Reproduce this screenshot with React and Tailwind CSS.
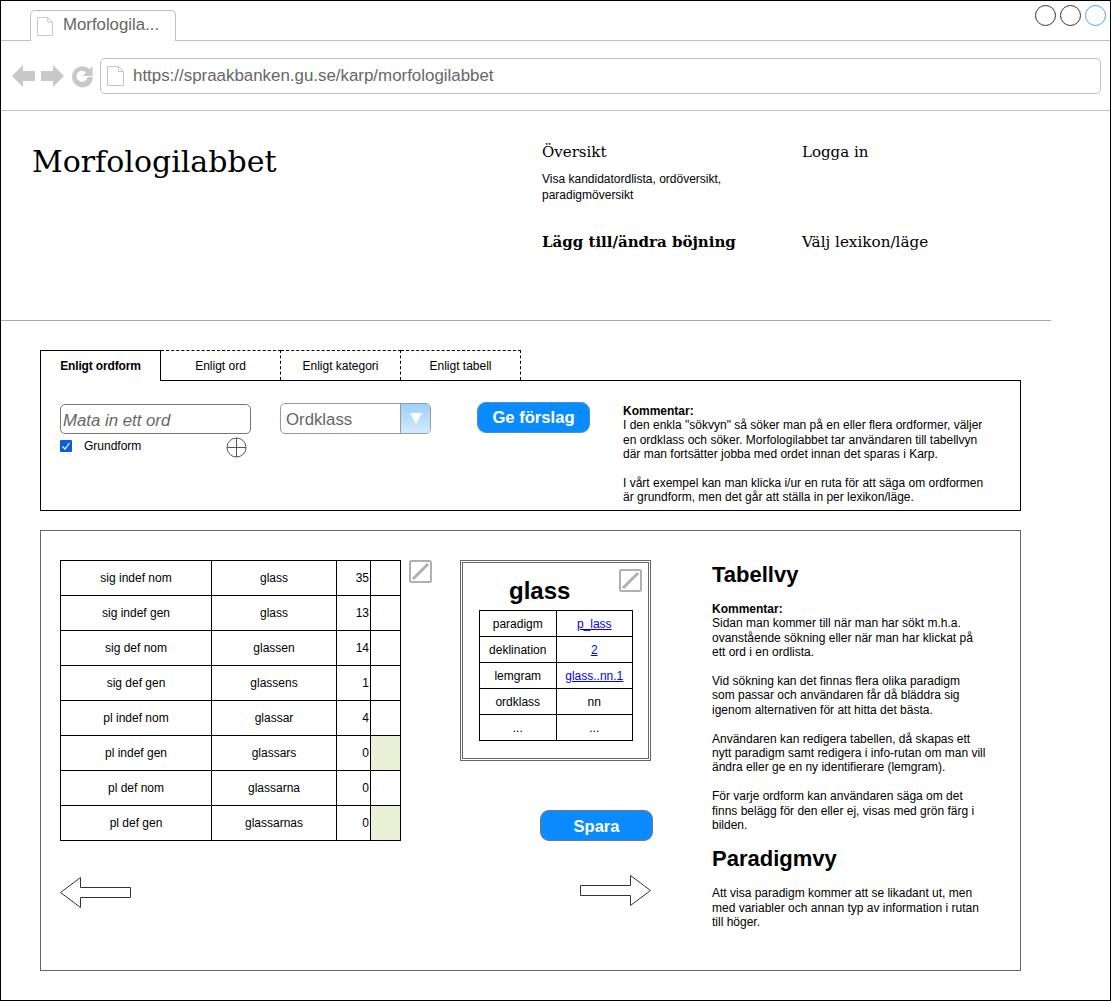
const SANS = "font-['Liberation_Sans',Arial,sans-serif]";
const SERIF = "font-['DejaVu_Serif',serif]";

const forms = [
  ['sig indef nom', 'glass', '35', false],
  ['sig indef gen', 'glass', '13', false],
  ['sig def nom', 'glassen', '14', false],
  ['sig def gen', 'glassens', '1', false],
  ['pl indef nom', 'glassar', '4', false],
  ['pl indef gen', 'glassars', '0', true],
  ['pl def nom', 'glassarna', '0', false],
  ['pl def gen', 'glassarnas', '0', true],
];

function PageIcon({ className }) {
  return (
    <svg className={className} viewBox="0 0 17 20" fill="none">
      <path d="M.5.5H11.5L16.5 5.5V19.5H.5Z" fill="#fff" stroke="#c4c4c4" />
      <path d="M11.5.5V5.5H16.5" stroke="#c4c4c4" />
    </svg>
  );
}

function EditIcon({ className }) {
  return (
    <svg className={className} viewBox="0 0 23 23" fill="none">
      <rect x="1" y="1" width="21" height="21" rx="1.500" fill="#fff" stroke="#b0b0b0" stroke-width="2" />
      <path d="M4 19 19 4" stroke="#b0b0b0" stroke-width="3" />
    </svg>
  );
}

function BlockArrow({ flip, className }) {
  return (
    <svg className={`${className} ${flip ? '-scale-x-100' : ''}`} viewBox="0 0 71 32" fill="none">
      <path d="M.5 10.500H50.500V.5L70.500 15.500 50.500 30.500V20.500H.5Z" fill="#fff" stroke="#333" />
    </svg>
  );
}

function ChromeButtons() {
  return (
    <svg className="ml-[11px] w-[83px] h-[26px] shrink-0" viewBox="0 0 83 26" fill="#c8c8c8">
      <path d="M0 13 11 2V8H23V18H11V24Z" />
      <path d="M52 13 41 2V8H29V18H41V24Z" />
      <path d="M81 14a10.500 10.500 0 1 1-3.500-8L80.500 3V13H70.500L74 9.500A5.500 5.500 0 1 0 75.500 14Z" />
    </svg>
  );
}

function Browser() {
  return (
    <div className={`${SANS} relative`}>
      <div className="h-[40px] border-b border-[#c0c0c0] flex items-end pl-[29px]">
        <div className="w-[146px] h-[31px] -mb-px bg-white border border-b-0 border-[#c0c0c0] rounded-t-[5px] flex items-center pl-[6px] gap-[10px] pb-[2px]">
          <PageIcon className="w-[16px] h-[19px] mt-[2px]" />
          <span className="text-[16.8px] text-[#666]">Morfologila...</span>
        </div>
      </div>
      <div className="absolute top-[4px] right-[4px] flex gap-[4px]">
        <div className="w-[21px] h-[21px] rounded-full border border-[#333]" />
        <div className="w-[21px] h-[21px] rounded-full border border-[#333]" />
        <div className="w-[21px] h-[21px] rounded-full border border-[#3ea6ff]" />
      </div>
      <div className="h-[70px] border-b border-[#c0c0c0] flex items-center">
        <ChromeButtons />
        <div className="ml-[5px] w-[1001px] h-[36px] border border-[#c0c0c0] rounded-[5px] flex items-center pl-[6px] gap-[9px]">
          <PageIcon className="w-[17px] h-[20px]" />
          <span className="text-[16.9px] text-[#666]">https://spraakbanken.gu.se/karp/morfologilabbet</span>
        </div>
      </div>
    </div>
  );
}

function SiteHeader() {
  return (
    <div className={`${SERIF} h-[210px] w-[1050px] border-b border-[#aaa] flex text-black`}>
      <h1 className="ml-[31px] w-[510px] mt-[30px] text-[30px] leading-[42px] font-normal">Morfologilabbet</h1>
      <div className="w-[260px] pt-[31px]">
        <div className="text-[15px] leading-[20px]">Översikt</div>
        <p className={`${SANS} mt-[9px] text-[12px] leading-[16px] w-[220px]`}>
          Visa kandidatordlista, ordöversikt, paradigmöversikt
        </p>
        <div className="mt-[29px] text-[15px] leading-[20px] font-bold">Lägg till/ändra böjning</div>
      </div>
      <div className="pt-[31px]">
        <div className="text-[15px] leading-[20px]">Logga in</div>
        <div className="mt-[70px] text-[15.200px] leading-[20px]">Välj lexikon/läge</div>
      </div>
    </div>
  );
}

function SearchPanel() {
  return (
    <div className="ml-[39px] mt-[29px] w-[981px]">
      <div className="flex h-[30px] text-[12px] text-black">
        <div className="w-[121px] h-[31px] border border-black border-b-0 bg-white font-bold tracking-[-0.15px] flex items-center justify-center relative z-10">
          Enligt ordform
        </div>
        {['Enligt ord', 'Enligt kategori', 'Enligt tabell'].map((t) => (
          <div key={t} className="w-[120px] border border-l-0 border-b-0 border-dashed border-black flex items-center justify-center">
            {t}
          </div>
        ))}
      </div>
      <div className="h-[131px] border border-black flex text-black">
        <div className="ml-[19px] mt-[23px] w-[191px]">
          <div className="h-[30px] border border-[#777] rounded-[5px] flex items-center pl-[2px] pt-[3px] text-[16.8px] italic text-[#666]">
            Mata in ett ord
          </div>
          <div className="flex items-start mt-[5px] relative">
            <span className="w-[12px] h-[12px] mt-[1px] bg-[#0a5ce0] rounded-[1px] flex items-center justify-center">
              <svg className="w-[10px] h-[10px]" viewBox="0 0 10 10" fill="none">
                <path d="M1.500 5.500 4 8 8.500 2" stroke="#fff" stroke-width="1.200" />
              </svg>
            </span>
            <span className="ml-[12px] text-[12px] leading-[14px]">Grundform</span>
            <svg className="absolute right-[4px] top-[-2px] w-[21px] h-[21px]" viewBox="0 0 21 21" fill="none" stroke="#555">
              <circle cx="10.500" cy="10.500" r="9.500" />
              <path d="M10.500 1V20M1 10.500H20" />
            </svg>
          </div>
        </div>
        <div className="ml-[29px] mt-[22px] w-[151px] h-[31px] border border-[#999] rounded-[5px] flex overflow-hidden">
          <span className="flex-1 pl-[5px] pt-px text-[16.8px] leading-[29px] text-[#666]">Ordklass</span>
          <span className="w-[30px] border-l border-[#999] bg-gradient-to-b from-[#9cd0fa] to-[#d4eafd] flex items-center justify-center">
            <svg className="w-[14px] h-[11px]" viewBox="0 0 14 11" fill="#fff">
              <path d="M1 0H13L7 11Z" />
            </svg>
          </span>
        </div>
        <button className="ml-[46px] mt-[21px] w-[113px] h-[31px] pt-px rounded-[9px] bg-[#0a8cff] border border-[#4b8fd0] text-white font-bold text-[16.6px]">
          Ge förslag
        </button>
        <div className="ml-[33px] mt-[23px] w-[367px] text-[12px] leading-[14.4px]">
          <div className="font-bold">Kommentar:</div>
          <p>I den enkla "sökvyn" så söker man på en eller flera ordformer, väljer en ordklass och söker. Morfologilabbet tar användaren till tabellvyn där man fortsätter jobba med ordet innan det sparas i Karp.</p>
          <p className="mt-[14.4px]">I vårt exempel kan man klicka i/ur en ruta för att säga om ordformen är grundform, men det går att ställa in per lexikon/läge.</p>
        </div>
      </div>
    </div>
  );
}

function FormTable() {
  return (
    <table className="w-[340px] h-[281px] table-fixed border-collapse text-[12px] text-black">
      <colgroup>
        <col className="w-[151px]" />
        <col className="w-[125px]" />
        <col className="w-[34px]" />
        <col className="w-[30px]" />
      </colgroup>
      <tbody>
        {forms.map(([form, word, count, green]) => (
          <tr key={form} className="h-[35px]">
            <td className="border border-black text-center p-0">{form}</td>
            <td className="border border-black text-center p-0">{word}</td>
            <td className="border border-black text-right p-0 pr-px">{count}</td>
            <td className={`border border-black p-0 ${green ? 'bg-[#ebf1d6]' : ''}`} />
          </tr>
        ))}
      </tbody>
    </table>
  );
}

function InfoBox() {
  const link = 'text-[#0000ee] underline';
  const rows = [
    ['paradigm', <a key="a" className={link}>p_lass</a>],
    ['deklination', <a key="b" className={link}>2</a>],
    ['lemgram', <a key="c" className={link}>glass..nn.1</a>],
    ['ordklass', 'nn'],
    ['...', '...'],
  ];
  return (
    <div className="w-[191px] h-[201px] border-[3px] border-double border-[#666] relative">
      <EditIcon className="absolute top-[6px] right-[6px] w-[23px] h-[23px]" />
      <div className="ml-[46px] mt-[10px] text-[24px] leading-[36px] font-bold text-black">glass</div>
      <table className="ml-[16px] mt-[1px] w-[154px] h-[131px] table-fixed border-collapse text-[12px] text-black">
        <tbody>
          {rows.map(([k, v]) => (
            <tr key={k + v} className="h-[26px]">
              <td className="border border-black text-center p-0">{k}</td>
              <td className="border border-black text-center p-0">{v}</td>
            </tr>
          ))}
        </tbody>
      </table>
    </div>
  );
}

function TablePanel() {
  return (
    <div className="ml-[39px] mt-[19px] w-[981px] h-[441px] border border-[#666] flex text-black">
      <div className="ml-[19px] mt-[29px] w-[341px]">
        <FormTable />
        <BlockArrow flip className="mt-[36px] w-[71px] h-[32px]" />
      </div>
      <EditIcon className="ml-[8px] mt-[29px] w-[23px] h-[23px]" />
      <div className="ml-[28px] mt-[29px] w-[193px]">
        <InfoBox />
        <button className="ml-[80px] mt-[49px] w-[113px] h-[31px] pt-px rounded-[9px] bg-[#0a8cff] border border-[#777] text-white font-bold text-[16.5px]">
          Spara
        </button>
        <BlockArrow className="ml-[120px] mt-[34px] w-[71px] h-[32px]" />
      </div>
      <div className="ml-[59px] mt-[29px] w-[273.5px] text-[12px] leading-[14.4px]">
        <h2 className="text-[22px] leading-[30px] font-bold">Tabellvy</h2>
        <div className="mt-[12px] font-bold">Kommentar:</div>
        <p>Sidan man kommer till när man har sökt m.h.a. ovanstående sökning eller när man har klickat på ett ord i en ordlista.</p>
        <p className="mt-[14.4px]">Vid sökning kan det finnas flera olika paradigm som passar och användaren får då bläddra sig igenom alternativen för att hitta det bästa.</p>
        <p className="mt-[14.4px]">Användaren kan redigera tabellen, då skapas ett nytt paradigm samt redigera i info-rutan om man vill ändra eller ge en ny identifierare (lemgram).</p>
        <p className="mt-[14.4px]">För varje ordform kan användaren säga om det finns belägg för den eller ej, visas med grön färg i bilden.</p>
        <h2 className="mt-[12px] text-[22px] leading-[30px] font-bold">Paradigmvy</h2>
        <p className="mt-[12px]">Att visa paradigm kommer att se likadant ut, men med variabler och annan typ av information i rutan till höger.</p>
      </div>
    </div>
  );
}

export default function App() {
  return (
    <div className={`${SANS} w-[1111px] h-[1001px] border border-black bg-white overflow-hidden`}>
      <Browser />
      <SiteHeader />
      <SearchPanel />
      <TablePanel />
    </div>
  );
}
